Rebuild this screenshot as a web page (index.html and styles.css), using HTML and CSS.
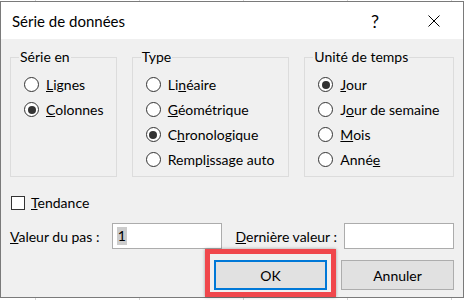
FILE: index.html
```html
<!DOCTYPE html>
<html lang="fr">
<head>
    <meta charset="UTF-8">
    <title>Série de données</title>
    <link rel="stylesheet" href="styles.css">
</head>
<body>
    <div class="dialog">
        <div class="titlebar">
            <span class="title">Série de données</span>
            <span class="help">?</span>
            <svg class="close" width="12" height="12" viewBox="0 0 12 12">
                <line x1="0.5" y1="0.5" x2="11.5" y2="11.5" stroke="#000" stroke-width="1"></line>
                <line x1="11.5" y1="0.5" x2="0.5" y2="11.5" stroke="#000" stroke-width="1"></line>
            </svg>
        </div>

        <div class="content">
            <div class="groups">
                <fieldset class="group group-serie">
                    <legend>Série en</legend>
                    <div class="option"><span class="radio"></span><span><u>L</u>ignes</span></div>
                    <div class="option"><span class="radio checked"></span><span><u>C</u>olonnes</span></div>
                </fieldset>
                <fieldset class="group group-type">
                    <legend>Type</legend>
                    <div class="option"><span class="radio"></span><span>Li<u>n</u>éaire</span></div>
                    <div class="option"><span class="radio"></span><span><u>G</u>éométrique</span></div>
                    <div class="option"><span class="radio checked"></span><span>C<u>h</u>ronologique</span></div>
                    <div class="option"><span class="radio"></span><span>Rempl<u>i</u>ssage auto</span></div>
                </fieldset>
                <fieldset class="group group-unite">
                    <legend>Unité de temps</legend>
                    <div class="option"><span class="radio checked"></span><span><u>J</u>our</span></div>
                    <div class="option"><span class="radio"></span><span>J<u>o</u>ur de semaine</span></div>
                    <div class="option"><span class="radio"></span><span><u>M</u>ois</span></div>
                    <div class="option"><span class="radio"></span><span>Anné<u>e</u></span></div>
                </fieldset>
            </div>

            <div class="option trend"><span class="checkbox"></span><span><u>T</u>endance</span></div>

            <div class="fields">
                <label class="label-pas"><u>V</u>aleur du pas :</label>
                <div class="input"><span class="selected">1</span></div>
                <label class="label-last"><u>D</u>ernière valeur :</label>
                <div class="input"></div>
            </div>

            <div class="buttons">
                <div class="highlight-wrap">
                    <button class="btn btn-default">OK</button>
                    <div class="highlight"></div>
                </div>
                <button class="btn">Annuler</button>
            </div>
        </div>
    </div>
</body>
</html>
```

FILE: styles.css
```css
body {
    margin: 0;
    width: 465px;
    height: 300px;
    overflow: hidden;
    font-family: 'Lato', 'Noto Sans', sans-serif;
    font-size: 14px;
    color: #000;
    background-color: #fff;
    background-image: linear-gradient(to right, #d4d4d4 1px, transparent 1px);
    background-size: 104px 100%;
    background-position: 35px 0;
}

.dialog {
    box-sizing: border-box;
    width: 464px;
    height: 297px;
    margin-top: 1px;
    border: 1px solid #7a7a7a;
    background: #f0f0f0;
}

.titlebar {
    display: flex;
    align-items: center;
    height: 37px;
    padding-left: 11px;
    background: #fff;
}

.title {
    flex: 1;
    font-size: 15px;
}

.help {
    font-size: 18px;
    margin-right: 49px;
}

.close {
    margin-right: 23px;
}

.content {
    padding: 8px 9px 0 9px;
}

.groups {
    display: flex;
    gap: 15px;
}

.group {
    box-sizing: border-box;
    height: 130px;
    margin: 0;
    padding: 5px 0 0 13px;
    border: 1px solid #dcdcdc;
    min-width: 0;
}

.group legend {
    margin-left: -5px;
    padding: 0 1px;
    line-height: 20px;
}

.group-serie { width: 107px; }
.group-type { width: 158px; }
.group-unite { width: 150px; }

.option {
    display: flex;
    align-items: center;
    gap: 7px;
    height: 25px;
    white-space: nowrap;
}

.radio {
    position: relative;
    box-sizing: border-box;
    width: 15px;
    height: 15px;
    border: 1px solid #333;
    border-radius: 50%;
    background: #fff;
    flex: none;
}

.radio.checked::after {
    content: '';
    position: absolute;
    left: 2.5px;
    top: 2.5px;
    width: 8px;
    height: 8px;
    border-radius: 50%;
    background: #333;
}

.trend {
    margin-top: 13px;
    padding-left: 1px;
    gap: 6px;
}

.checkbox {
    box-sizing: border-box;
    width: 14px;
    height: 14px;
    border: 1px solid #333;
    background: #fff;
}

.fields {
    display: flex;
    align-items: center;
    margin-top: 8px;
    white-space: nowrap;
}

.label-pas {
    width: 102px;
}

.label-last {
    width: 109px;
    margin-left: 14px;
}

.input {
    box-sizing: border-box;
    width: 110px;
    height: 26px;
    border: 1px solid #acacac;
    background: #fff;
    padding: 3px 0 0 4px;
}

.selected {
    background: #cccccc;
    padding: 0 1px;
    line-height: 18px;
    display: inline-block;
}

.buttons {
    display: flex;
    justify-content: flex-end;
    gap: 14px;
    margin-top: 11px;
}

.btn {
    box-sizing: border-box;
    width: 113px;
    height: 30px;
    border: 1px solid #adadad;
    background: #e1e1e1;
    font-family: inherit;
    font-size: 14px;
    color: #000;
    padding: 0;
}

.btn-default {
    border: 2px solid #0078d7;
}

.highlight-wrap {
    position: relative;
}

/* red annotation box drawn over the OK button */
.highlight {
    position: absolute;
    left: -9px;
    right: -9px;
    top: -11px;
    bottom: -7px;
    border: 5px solid #f0474c;
    box-shadow: 0 0 3px rgba(0, 0, 0, 0.35);
}
```
